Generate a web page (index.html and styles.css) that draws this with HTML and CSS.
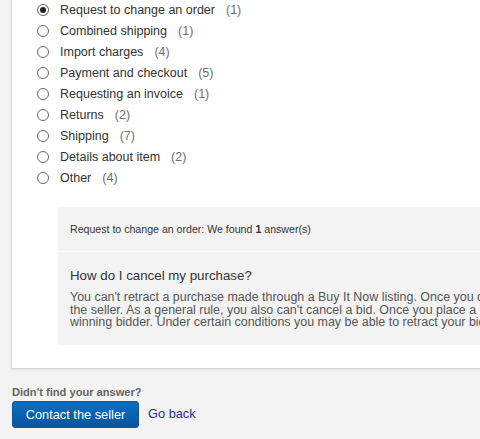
FILE: index.html
```html
<!DOCTYPE html>
<html>
<head>
<meta charset="utf-8">
<link rel="stylesheet" href="styles.css">
</head>
<body>
<div class="page">
  <div class="panel">
    <ul class="topics">
      <li class="topic"><span class="radio checked"></span><span class="label">Request to change an order</span><span class="count">(1)</span></li>
      <li class="topic"><span class="radio"></span><span class="label">Combined shipping</span><span class="count">(1)</span></li>
      <li class="topic"><span class="radio"></span><span class="label">Import charges</span><span class="count">(4)</span></li>
      <li class="topic"><span class="radio"></span><span class="label">Payment and checkout</span><span class="count">(5)</span></li>
      <li class="topic"><span class="radio"></span><span class="label">Requesting an invoice</span><span class="count">(1)</span></li>
      <li class="topic"><span class="radio"></span><span class="label">Returns</span><span class="count">(2)</span></li>
      <li class="topic"><span class="radio"></span><span class="label">Shipping</span><span class="count">(7)</span></li>
      <li class="topic"><span class="radio"></span><span class="label">Details about item</span><span class="count">(2)</span></li>
      <li class="topic"><span class="radio"></span><span class="label">Other</span><span class="count">(4)</span></li>
    </ul>
    <div class="answers">
      <div class="answers-head">Request to change an order: We found <b>1</b> answer(s)</div>
      <div class="answer">
        <h3 class="answer-title">How do I cancel my purchase?</h3>
        <p class="answer-text">You can't retract a purchase made through a Buy It Now listing. Once you commit to buy an item, you're entering into a contract with<br>the seller. As a general rule, you also can't cancel a bid. Once you place a bid, you're committing to buy the item if you're the<br>winning bidder. Under certain conditions you may be able to retract your bid.</p>
      </div>
    </div>
  </div>
  <div class="footer">
    <div class="footer-q">Didn't find your answer?</div>
    <div class="actions">
      <button class="btn-primary">Contact the seller</button>
      <a class="link" href="#">Go back</a>
    </div>
  </div>
</div>
</body>
</html>
```
FILE: styles.css
```css
html, body {
  margin: 0;
  padding: 0;
  background: #f3f3f3;
  overflow: hidden;
  font-family: Arial, "Liberation Sans", sans-serif;
  color: #333;
}
.page {
  padding-left: 11px;
  width: 700px;
}
.panel {
  background: #fff;
  border-left: 1px solid #dcdcdc;
  border-bottom: 1px solid #d6d6d6;
  box-shadow: 0 1px 2px rgba(0,0,0,0.08);
  padding-bottom: 23px;
}
.topics {
  list-style: none;
  margin: -1px 0 0;
  padding: 0 0 0 25px;
}
.topic {
  height: 21px;
  display: flex;
  align-items: center;
  font-size: 12.5px;
}
.radio {
  width: 10px;
  height: 10px;
  border: 1px solid #666;
  border-radius: 50%;
  box-sizing: content-box;
  margin-right: 11px;
  display: flex;
  align-items: center;
  justify-content: center;
  background: #fff;
}
.radio.checked::after {
  content: "";
  width: 6px;
  height: 6px;
  border-radius: 50%;
  background: #222;
}
.label {
  color: #333;
}
.count {
  color: #707070;
  margin-left: 11px;
}
.answers {
  margin: 19px 0 0 46px;
  background: #f3f3f3;
}
.answers-head {
  height: 44px;
  display: flex;
  align-items: center;
  padding-left: 12px;
  font-size: 10.6px;
  color: #333;
  border-bottom: 1px solid #fafafa;
}
.answers-head b {
  margin: 0 3px;
}
.answer {
  padding: 16px 12px 16px;
}
.answer-title {
  margin: 0 0 7px;
  font-size: 13.3px;
  line-height: 16px;
  font-weight: normal;
  color: #333;
}
.answer-text {
  margin: 0;
  font-size: 12.45px;
  line-height: 12.7px;
  color: #555;
  white-space: nowrap;
}
.footer {
  padding: 16px 0 0 1px;
}
.footer-q {
  font-size: 11.1px;
  font-weight: bold;
  color: #666;
  line-height: 14px;
}
.actions {
  display: flex;
  align-items: center;
  margin-top: 2px;
}
.btn-primary {
  width: 127px;
  height: 27px;
  border: 1px solid #0a5697;
  border-radius: 3px;
  background: linear-gradient(#0e6fc1, #0654a0);
  color: #fff;
  font-family: Arial, "Liberation Sans", sans-serif;
  font-size: 12.8px;
  padding: 0;
}
.link {
  margin-left: 9px;
  font-size: 12.8px;
  color: #2b2b9b;
  text-decoration: none;
  margin-top: -3px;
}
```
